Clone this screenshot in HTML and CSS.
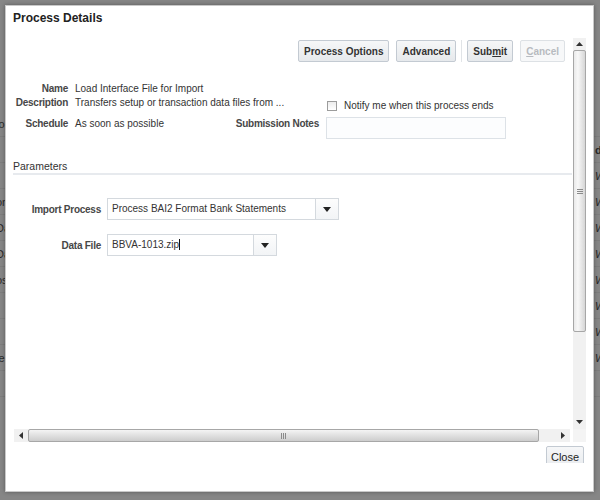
FILE: index.html
```html
<!DOCTYPE HTML>
<html lang="en">
  <head>
    <title>Process Details</title>
    <meta charset="utf-8">
    <link rel="stylesheet" href="styles.css">
  </head>
  <body>

  <div class="page">
    <div class="page-row"><span class="pl">lo</span><span class="pr"></span></div>
    <div class="page-row"><span class="pl"></span><span class="pr pr-head">d</span></div>
    <div class="page-row"><span class="pl"></span><span class="pr">W</span></div>
    <div class="page-row"><span class="pl">or</span><span class="pr">W</span></div>
    <div class="page-row"><span class="pl">Da</span><span class="pr">W</span></div>
    <div class="page-row"><span class="pl">Da</span><span class="pr">W</span></div>
    <div class="page-row"><span class="pl">os</span><span class="pr">W</span></div>
    <div class="page-row"><span class="pl"></span><span class="pr">W</span></div>
    <div class="page-row"><span class="pl"></span><span class="pr">W</span></div>
    <div class="page-row"><span class="pl">ie</span><span class="pr">W</span></div>
    <div class="page-row"><span class="pl"></span><span class="pr"></span></div>
  </div>

  <div class="dialog">
    <div class="dlg-title">Process Details</div>

    <div class="dlg-scroll">
      <div class="dlg-content">
        <div class="toolbar">
          <button class="btn">Process Options</button>
          <button class="btn">Advanced</button>
          <span class="tb-sep"></span>
          <button class="btn">Sub<u>m</u>it</button>
          <button class="btn" disabled><u>C</u>ancel</button>
        </div>

        <div class="details">
          <div class="lbl">Name</div>
          <div class="val">Load Interface File for Import</div>
          <div></div>
          <div></div>

          <div class="lbl">Description</div>
          <div class="val">Transfers setup or transaction data files from ...</div>
          <div></div>
          <div class="notify"><span class="chk"></span>Notify me when this process ends</div>

          <div class="lbl">Schedule</div>
          <div class="val">As soon as possible</div>
          <div class="lbl">Submission Notes</div>
          <div class="notes"></div>
        </div>

        <div class="section-hdr">Parameters</div>

        <div class="params">
          <div class="lbl">Import Process</div>
          <div class="combo combo-wide">
            <span class="combo-text">Process BAI2 Format Bank Statements</span>
            <span class="combo-btn"><svg width="8" height="5" viewBox="0 0 8 5"><path d="M0 0H8L4 5Z" fill="#222"/></svg></span>
          </div>

          <div class="lbl">Data File</div>
          <div class="combo combo-narrow">
            <span class="combo-text">BBVA-1013.zip<span class="caret"></span></span>
            <span class="combo-btn"><svg width="8" height="5" viewBox="0 0 8 5"><path d="M0 0H8L4 5Z" fill="#222"/></svg></span>
          </div>
        </div>
      </div>

      <div class="vscroll">
        <div class="sb-btn vs-up"><svg width="7" height="4" viewBox="0 0 7 4"><path d="M0 4L3.5 0L7 4Z" fill="#333"/></svg></div>
        <div class="vs-thumb"><svg width="6" height="5" viewBox="0 0 6 5"><path d="M0 .5H6M0 2.5H6M0 4.5H6" stroke="#8a8a8a"/></svg></div>
        <div class="sb-track"></div>
        <div class="sb-btn vs-down"><svg width="7" height="4" viewBox="0 0 7 4"><path d="M0 0H7L3.5 4Z" fill="#333"/></svg></div>
      </div>

      <div class="hscroll">
        <div class="sb-btn hs-left"><svg width="4" height="7" viewBox="0 0 4 7"><path d="M4 0V7L0 3.5Z" fill="#333"/></svg></div>
        <div class="hs-thumb"><svg width="5" height="6" viewBox="0 0 5 6"><path d="M.5 0V6M2.5 0V6M4.5 0V6" stroke="#8a8a8a"/></svg></div>
        <div class="sb-track"></div>
        <div class="sb-btn hs-right"><svg width="4" height="7" viewBox="0 0 4 7"><path d="M0 0V7L4 3.5Z" fill="#333"/></svg></div>
      </div>

      <div class="sb-corner"></div>
    </div>

    <div class="dlg-footer">
      <div class="close-clip"><button class="btn-close">Close</button></div>
    </div>
  </div>

  </body>
</html>
```

FILE: styles.css
```css
html {
  height: 100%;
}
body {
  margin: 0;
  width: 600px;
  height: 500px;
  overflow: hidden;
  position: relative;
  background: #868686;
  color: #333;
  font-family: "Liberation Sans", Arial, sans-serif;
  font-size: 10px;
}

/* dimmed page behind the dialog */
.page {
  padding-top: 111px;
}
.page-row {
  display: grid;
  grid-template-columns: 595px 1fr;
  height: 25px;
  align-items: center;
  border-bottom: 1px solid #7d7d7d;
  color: #2a2a2a;
  font-size: 11px;
}
.pl {
  text-indent: -4px;
  white-space: nowrap;
  overflow: hidden;
}
.pr {
  white-space: nowrap;
  font-style: italic;
}
.pr-head {
  font-style: normal;
  font-weight: bold;
}

/* dialog */
.dialog {
  position: absolute;
  left: 5px;
  top: 5px;
  width: 587px;
  height: 485px;
  background: #fff;
  border: 1px solid #c9c9c9;
  box-shadow: 0 0 4px rgba(0,0,0,0.35);
  display: flex;
  flex-direction: column;
}
.dlg-title {
  height: 28px;
  padding: 4px 7px 0;
  font-size: 12px;
  font-weight: bold;
  line-height: 16px;
  color: #222;
}
.dlg-scroll {
  margin-left: 7px;
  width: 573px;
  height: 404px;
  display: grid;
  grid-template-columns: 560px 13px;
  grid-template-rows: 391px 13px;
}
.dlg-content {
  overflow: hidden;
}

/* toolbar */
.toolbar {
  display: flex;
  justify-content: flex-end;
  gap: 7px;
  padding: 2px 8px 0 0;
}
.btn {
  height: 22px;
  padding: 0 5px;
  border: 1px solid #c3cad2;
  border-radius: 2px;
  background: linear-gradient(#f6f7f8, #e6e9ec);
  font: bold 10px "Liberation Sans", Arial, sans-serif;
  color: #333;
}
.btn:disabled {
  color: #b7bbc0;
  border-color: #dde1e5;
  background: #f7f8f9;
}
.tb-sep {
  width: 1px;
  margin: 0 -2px;
  background: #e1e4e7;
}

/* header fields */
.details {
  display: grid;
  grid-template-columns: 55px 150px 87px 180px;
  grid-template-rows: 14px 21px 22px;
  column-gap: 7px;
  margin-top: 20px;
  line-height: 14px;
}
.lbl {
  font-weight: bold;
  letter-spacing: -0.25px;
  color: #474747;
  text-align: right;
  white-space: nowrap;
}
.val {
  white-space: nowrap;
  color: #333;
}
.notify {
  display: flex;
  align-items: center;
  gap: 7px;
  height: 14px;
  margin: 3px 0 0 1px;
  white-space: nowrap;
  color: #333;
}
.chk {
  width: 10px;
  height: 10px;
  box-sizing: border-box;
  border: 1px solid #9c9c9c;
  background: linear-gradient(#ececec, #fff);
}
.notes {
  height: 22px;
  box-sizing: border-box;
  border: 1px solid #dde2e7;
  background: #fcfdfe;
}

/* parameters */
.section-hdr {
  margin-top: 21px;
  font-size: 10.5px;
  line-height: 13px;
  color: #333;
  border-bottom: 2px solid #e7eaee;
  margin-right: 1px;
}
.params {
  display: grid;
  grid-template-columns: 88px auto;
  justify-content: start;
  align-items: center;
  column-gap: 6px;
  row-gap: 14px;
  margin-top: 23px;
}
.combo {
  display: flex;
  height: 22px;
  box-sizing: border-box;
  border: 1px solid #d4d9de;
  background: #fff;
}
.combo-wide {
  width: 232px;
}
.combo-narrow {
  width: 170px;
}
.combo-text {
  flex: 1;
  padding-left: 4px;
  line-height: 20px;
  color: #333;
  white-space: nowrap;
  overflow: hidden;
}
.combo-btn {
  width: 22px;
  border-left: 1px solid #d4d9de;
  display: flex;
  align-items: center;
  justify-content: center;
  background: linear-gradient(#fdfdfd, #f2f4f6);
}
.caret {
  display: inline-block;
  width: 1px;
  height: 11px;
  background: #111;
  vertical-align: -2px;
}

/* fake scrollbars */
.vscroll {
  display: flex;
  flex-direction: column;
  background: #f1f1f1;
}
.hscroll {
  display: flex;
  margin: 0 3px 0 1px;
  background: #f1f1f1;
}
.sb-corner {
  background: #f4f4f4;
}
.sb-btn {
  display: flex;
  align-items: center;
  justify-content: center;
}
.sb-track {
  flex: 1;
}
.vs-up {
  height: 12px;
}
.vs-down {
  height: 14px;
}
.vs-thumb {
  height: 282px;
  box-sizing: border-box;
  border: 1px solid #a7a7a7;
  border-radius: 2px;
  background: linear-gradient(to right, #e9e9e9, #f8f8f8 35%, #d6d6d6);
  display: flex;
  align-items: center;
  justify-content: center;
}
.hs-left,
.hs-right {
  width: 14px;
}
.hs-thumb {
  width: 511px;
  box-sizing: border-box;
  border: 1px solid #a7a7a7;
  border-radius: 2px;
  background: linear-gradient(#f4f4f4, #e0e0e0 50%, #cdcdcd);
  display: flex;
  align-items: center;
  justify-content: center;
}

/* footer */
.dlg-footer {
  display: flex;
  justify-content: flex-end;
  padding: 4px 9px 0 0;
}
.close-clip {
  height: 17px;
  overflow: hidden;
}
.btn-close {
  width: 38px;
  height: 22px;
  padding: 0;
  border: 1px solid #c3cad2;
  border-radius: 2px;
  background: linear-gradient(#f6f7f8, #e8ebee);
  font: 11px "Liberation Sans", Arial, sans-serif;
  color: #1e1e1e;
}
```
